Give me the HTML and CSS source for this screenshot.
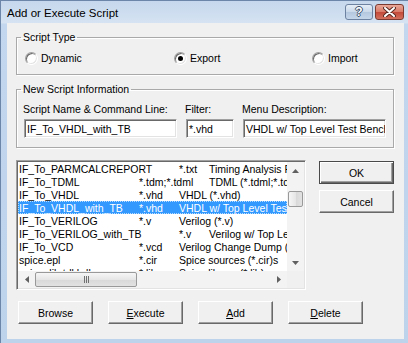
FILE: index.html
```html
<!DOCTYPE html>
<html lang="en">
<head>
	<meta charset="UTF-8">
	<title>Add or Execute Script</title>
	<link rel="stylesheet" href="styles.css">
</head>
<body>
	<div class="window">
		<div class="titlebar">
			<span class="title">Add or Execute Script</span>
			<div class="caption-buttons">
				<div class="cap-btn help">?</div>
				<div class="cap-btn close">
					<svg width="13" height="10" viewBox="0 0 13 10">
						<path d="M2 1 L11 9 M11 1 L2 9" stroke="#5a2a22" stroke-width="4" stroke-linecap="round"/>
						<path d="M2 1 L11 9 M11 1 L2 9" stroke="#fff" stroke-width="2" stroke-linecap="round"/>
					</svg>
				</div>
			</div>
		</div>

		<div class="client">
			<fieldset class="group type-group">
				<legend>Script Type</legend>
				<div class="radios">
					<div class="radio r-first"><span class="circle"></span>Dynamic</div>
					<div class="radio r-second"><span class="circle checked"></span>Export</div>
					<div class="radio"><span class="circle"></span>Import</div>
				</div>
			</fieldset>

			<fieldset class="group info-group">
				<legend>New Script Information</legend>
				<div class="fields">
					<div class="field f-name">
						<label>Script Name &amp; Command Line:</label>
						<div class="edit">IF_To_VHDL_with_TB</div>
					</div>
					<div class="field f-filter">
						<label>Filter:</label>
						<div class="edit">*.vhd</div>
					</div>
					<div class="field f-menu">
						<label>Menu Description:</label>
						<div class="edit">VHDL w/ Top Level Test Bench (*.vhd)</div>
					</div>
				</div>
			</fieldset>

			<div class="middle">
				<div class="listbox">
					<div class="rows">
						<div class="row"><span class="n160">IF_To_PARMCALCREPORT</span><span class="f30">*.txt</span><span>Timing Analysis Report (*.txt)</span></div>
						<div class="row"><span class="n120">IF_To_TDML</span><span class="f70">*.tdm;*.tdml</span><span>TDML (*.tdml;*.tdm)</span></div>
						<div class="row"><span class="n120">IF_To_VHDL</span><span class="f40">*.vhd</span><span>VHDL (*.vhd)</span></div>
						<div class="row selected"><span class="n120">IF_To_VHDL_with_TB</span><span class="f40">*.vhd</span><span>VHDL w/ Top Level Test Bench (*.vhd)</span></div>
						<div class="row"><span class="n120">IF_To_VERILOG</span><span class="f40">*.v</span><span>Verilog (*.v)</span></div>
						<div class="row"><span class="n160">IF_To_VERILOG_with_TB</span><span class="f30">*.v</span><span>Verilog w/ Top Level Test Bench (*.v)</span></div>
						<div class="row"><span class="n120">IF_To_VCD</span><span class="f40">*.vcd</span><span>Verilog Change Dump (*.vcd)</span></div>
						<div class="row"><span class="n120">spice.epl</span><span class="f40">*.cir</span><span>Spice sources (*.cir)s</span></div>
						<div class="row"><span class="n120">spice_lib.tdl.hdl</span><span class="f40">*.lib</span><span>Spice library (*.lib)</span></div>
					</div>
					<div class="vscroll">
						<div class="arrow"><svg width="7" height="4"><polygon points="0,4 7,4 3.5,0" fill="#606060"/></svg></div>
						<div class="track"><div class="thumb"></div></div>
						<div class="arrow"><svg width="7" height="4"><polygon points="0,0 7,0 3.5,4" fill="#606060"/></svg></div>
					</div>
					<div class="hscroll">
						<div class="arrow"><svg width="4" height="7"><polygon points="4,0 4,7 0,3.5" fill="#606060"/></svg></div>
						<div class="track">
							<div class="thumb">
								<svg width="7" height="7"><path d="M1.5 0 V7 M3.5 0 V7 M5.5 0 V7" stroke="#707070" stroke-width="1"/></svg>
							</div>
						</div>
						<div class="arrow"><svg width="4" height="7"><polygon points="0,0 0,7 4,3.5" fill="#606060"/></svg></div>
					</div>
					<div class="corner"></div>
				</div>

				<div class="side-buttons">
					<button class="btn default">OK</button>
					<button class="btn">Cancel</button>
				</div>
			</div>

			<div class="bottom-buttons">
				<button class="btn">Browse</button>
				<button class="btn"><u>E</u>xecute</button>
				<button class="btn"><u>A</u>dd</button>
				<button class="btn"><u>D</u>elete</button>
			</div>
		</div>
	</div>
</body>
</html>
```

FILE: styles.css
```css
body {
	margin: 0;
	font-family: "Liberation Sans", Arial, sans-serif;
	font-size: 10.5px;
	color: #000;
}

.window {
	width: 408px;
	height: 343px;
	box-sizing: border-box;
	border-top: 1px solid #6b86a8;
	border-left: 1px solid #6b86a8;
	background: linear-gradient(#c6d8ed, #d5e3f2 22px, #c3d7ee 23px, #bdd3ec);
	display: flex;
	flex-direction: column;
	overflow: hidden;
}

/* title bar */
.titlebar {
	height: 22px;
	flex: none;
	display: flex;
	justify-content: space-between;
	padding: 0 4px 0 6px;
}

.title {
	font-size: 11.5px;
	line-height: 22px;
	margin-top: 1px;
}

.caption-buttons {
	display: flex;
	gap: 2px;
	margin-top: 3px;
}

.cap-btn {
	height: 16px;
	box-sizing: border-box;
	border: 1px solid #6d82a0;
	border-radius: 3px;
	display: flex;
	align-items: center;
	justify-content: center;
}

.help {
	width: 28px;
	background: linear-gradient(#e4edf7, #c9d8ea 50%, #b3c7de 51%, #c5d6ea);
	color: #fff;
	font-weight: bold;
	font-size: 12px;
	text-shadow: 1px 0 #3c4f6a, -1px 0 #3c4f6a, 0 1px #3c4f6a, 0 -1px #3c4f6a;
}

.close {
	width: 29px;
	border-color: #7b3a31;
	background: linear-gradient(#e9a898, #d97a68 50%, #c4493a 51%, #d2705e);
}

/* dialog body */
.client {
	flex: 1;
	margin: 0 4px 4px 6px;
	background: #f0f0f0;
	display: flex;
	flex-direction: column;
}

.group {
	margin: 8px 10px 0 9px;
	border: 1px solid #a9a9a9;
	box-shadow: inset 1px 1px 0 #fff, 1px 1px 0 #fff;
	min-width: 0;
}

.group legend {
	line-height: 13px;
	padding: 0 2px;
}

.type-group {
	padding: 8px 7px 9px 8px;
}

.type-group legend {
	margin-left: -4px;
}

.radios {
	display: flex;
	line-height: 13px;
}

.radio {
	display: flex;
	align-items: center;
}

.r-first {
	width: 149px;
}

.r-second {
	width: 138px;
}

.circle {
	width: 13px;
	height: 13px;
	box-sizing: border-box;
	border-radius: 50%;
	border: 1px solid;
	border-color: #a0a0a0 #fff #fff #a0a0a0;
	box-shadow: inset 1px 1px 0 #696969, inset -1px -1px 0 #e3e3e3;
	background: #fff;
	margin-right: 3px;
	position: relative;
}

.circle.checked::after {
	content: "";
	position: absolute;
	left: 3px;
	top: 3px;
	width: 5px;
	height: 5px;
	border-radius: 50%;
	background: #000;
}

.info-group {
	padding: 7px 7px 9px 7px;
}

.info-group legend {
	margin-left: -3px;
}

.fields {
	display: flex;
	gap: 9px;
}

.field {
	display: flex;
	flex-direction: column;
	gap: 3px;
}

.field label {
	line-height: 13px;
	margin-left: -1px;
	white-space: nowrap;
}

.f-name {
	width: 153px;
}

.f-filter {
	width: 48px;
}

.f-menu {
	width: 143px;
}

.edit {
	height: 19px;
	box-sizing: border-box;
	border: 1px solid;
	border-color: #a0a0a0 #fff #fff #a0a0a0;
	box-shadow: inset 1px 1px 0 #696969, inset -1px -1px 0 #e3e3e3;
	background: #fff;
	padding: 1px 2px 0 2px;
	line-height: 16px;
	white-space: nowrap;
	overflow: hidden;
}

/* list and side buttons */
.middle {
	display: flex;
	margin: 12px 0 0 9px;
}

.listbox {
	width: 290px;
	height: 130px;
	box-sizing: border-box;
	border: 1px solid;
	border-color: #a0a0a0 #fff #fff #a0a0a0;
	box-shadow: inset 1px 1px 0 #696969, inset -1px -1px 0 #e3e3e3;
	background: #fff;
	padding: 1px;
	display: grid;
	grid-template-columns: 1fr 17px;
	grid-template-rows: 1fr 17px;
}

.rows {
	overflow: hidden;
	min-width: 0;
}

.row {
	display: flex;
	height: 13px;
	box-sizing: border-box;
	padding: 1px 0 0 1px;
	line-height: 13px;
	white-space: nowrap;
}

.row span {
	flex: none;
}

.row.selected {
	background: #3399ff;
	color: #fff;
	outline: 1px dotted #b8dcff;
	outline-offset: -1px;
}

.n120 { width: 120px; }
.n160 { width: 160px; }
.f30 { width: 30px; }
.f40 { width: 40px; }
.f70 { width: 70px; }

.vscroll,
.hscroll {
	display: flex;
	background: #f3f3f3;
}

.vscroll {
	flex-direction: column;
}

.arrow {
	width: 17px;
	height: 17px;
	flex: none;
	display: flex;
	align-items: center;
	justify-content: center;
}

.track {
	flex: 1;
	display: flex;
}

.thumb {
	box-sizing: border-box;
	border: 1px solid #999;
	border-radius: 2px;
	display: flex;
	align-items: center;
	justify-content: center;
}

.vscroll .track {
	flex-direction: column;
}

.vscroll .thumb {
	margin: 12px 1px 0 1px;
	height: 16px;
	background: linear-gradient(to right, #f6f6f6, #e6e6e6 50%, #d8d8d8 51%, #e2e2e2);
}

.hscroll .thumb {
	width: 102px;
	margin: 1px 0;
	background: linear-gradient(#f6f6f6, #e6e6e6 50%, #d8d8d8 51%, #e2e2e2);
}

.corner {
	background: #f0f0f0;
}

.side-buttons {
	display: flex;
	flex-direction: column;
	gap: 6px;
	margin: 1px 0 0 13px;
}

.btn {
	width: 75px;
	height: 23px;
	box-sizing: border-box;
	font: inherit;
	color: #000;
	background: #f0f0f0;
	border: 1px solid;
	border-color: #fff #696969 #696969 #fff;
	box-shadow: inset -1px -1px 0 #a0a0a0;
	padding: 0;
}

.btn.default {
	border-color: #4a4a4a;
	box-shadow: inset 1px 1px 0 #fff, inset -1px -1px 0 #696969, inset -2px -2px 0 #a0a0a0;
}

.bottom-buttons {
	display: flex;
	gap: 15px;
	margin: 11px 0 0 11px;
}
```
